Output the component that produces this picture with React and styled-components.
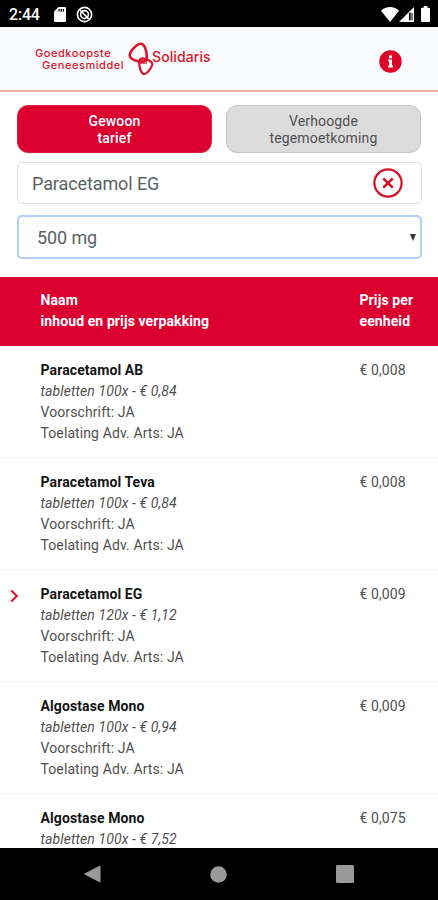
import React from 'react';
import styled, { createGlobalStyle } from 'styled-components';

const GlobalStyle = createGlobalStyle`
  * {
    box-sizing: border-box;
  }

  body {
    margin: 0;
    background: #fff;
    font-family: Roboto, 'Liberation Sans', sans-serif;
  }
`;

const Screen = styled.div`
  display: flex;
  flex-direction: column;
  width: 438px;
  height: 900px;
  overflow: hidden;
  background: #fff;
`;

const StatusBar = styled.div`
  display: flex;
  align-items: center;
  height: 27px;
  flex-shrink: 0;
  padding: 1px 8px 0 9px;
  background: #000;
  color: #fff;
`;

const Clock = styled.span`
  width: 45px;
  font-size: 16px;
  font-weight: 500;
  letter-spacing: -0.2px;
`;

const StatusIcons = styled.div`
  display: flex;
  align-items: center;
  gap: ${props => props.$gap}px;
  margin-left: ${props => (props.$right ? 'auto' : '0')};

  svg {
    display: block;
  }
`;

const Header = styled.header`
  display: flex;
  align-items: center;
  justify-content: space-between;
  height: 65px;
  flex-shrink: 0;
  padding: 0 36px 0 35px;
  background: #f8fafb;
  border-bottom: 2px solid #eeabae;
`;

const Brand = styled.div`
  display: flex;
  align-items: center;
  color: #d8142c;
  font-family: Inter, Roboto, sans-serif;
  font-weight: 500;
`;

const BrandName = styled.div`
  display: flex;
  flex-direction: column;
  width: 93px;
  padding-top: 1px;
  font-size: 11px;
  line-height: 12px;
  letter-spacing: 0.55px;
  white-space: nowrap;
`;

const BrandLine = styled.div`
  height: 12px;
  padding-left: ${props => (props.$indent ? '7px' : '0')};
`;

const Partner = styled.div`
  margin: -4px 0 0 -2px;
  font-size: 14px;
  letter-spacing: 0.1px;
`;

const InfoButton = styled.button`
  display: flex;
  margin-top: 5px;
  padding: 0;
  border: 0;
  background: none;
`;

const Filters = styled.section`
  display: flex;
  flex-direction: column;
  flex-shrink: 0;
  height: 184.5px;
  padding: 13px 16px 0;
`;

const Tabs = styled.div`
  display: flex;
  justify-content: space-between;
  padding: 0 1px;
  margin-bottom: 9px;
`;

const Tab = styled.button`
  width: 195px;
  height: 48px;
  padding: 1px 0 0;
  border: 1px solid ${props => (props.$active ? '#d9223d' : '#c6c6c6')};
  border-radius: 11px;
  background: ${props => (props.$active ? '#dc0031' : '#dcdcdc')};
  color: ${props => (props.$active ? '#fff' : '#505050')};
  font-family: inherit;
  font-size: 14px;
  font-weight: ${props => (props.$active ? 500 : 400)};
  line-height: 17px;
  letter-spacing: 0.15px;
`;

const Field = styled.div`
  display: flex;
  align-items: center;
  justify-content: space-between;
  height: ${props => (props.$focused ? 44 : 42)}px;
  margin: 0 0 11px 1px;
  padding: ${props => (props.$focused ? '0 4px 0 18px' : '0 18px 0 14px')};
  border: ${props => (props.$focused ? '2px solid #b4d1fa' : '1px solid #dcdfe1')};
  border-radius: 5px;
  color: #5a5f64;
  font-size: 18px;
  letter-spacing: -0.1px;
`;

const Columns = styled.div`
  display: grid;
  grid-template-columns: 319px 1fr;
  padding-left: 40.5px;
  flex-shrink: 0;
  font-size: 14px;
  line-height: 21.1px;
  letter-spacing: 0.1px;
`;

const TableHead = styled(Columns)`
  height: 69px;
  padding-top: 13.5px;
  background: #dc0031;
  color: #fff;
  font-weight: 700;
`;

const List = styled.div`
  flex: 1;
  min-height: 0;
  overflow: hidden;
`;

const Row = styled(Columns)`
  grid-template-columns: 30.5px 319px 1fr;
  height: 112px;
  padding: 14px 0 0 10px;
  border-bottom: 1px solid #f2f2f2;
  color: #505050;
`;

const Marker = styled.div`
  padding-top: 5px;

  svg {
    display: block;
  }
`;

const Name = styled.div`
  color: #151515;
  font-weight: 700;
`;

const Packaging = styled.div`
  font-style: italic;
`;

const NavBar = styled.nav`
  display: flex;
  align-items: center;
  justify-content: space-between;
  height: 52px;
  flex-shrink: 0;
  padding: 0 84px;
  background: #000;
`;

const medicines = [
  {
    name: 'Paracetamol AB',
    packaging: 'tabletten 100x - € 0,84',
    details: ['Voorschrift: JA', 'Toelating Adv. Arts: JA'],
    price: '€ 0,008',
  },
  {
    name: 'Paracetamol Teva',
    packaging: 'tabletten 100x - € 0,84',
    details: ['Voorschrift: JA', 'Toelating Adv. Arts: JA'],
    price: '€ 0,008',
  },
  {
    name: 'Paracetamol EG',
    packaging: 'tabletten 120x - € 1,12',
    details: ['Voorschrift: JA', 'Toelating Adv. Arts: JA'],
    price: '€ 0,009',
    selected: true,
  },
  {
    name: 'Algostase Mono',
    packaging: 'tabletten 100x - € 0,94',
    details: ['Voorschrift: JA', 'Toelating Adv. Arts: JA'],
    price: '€ 0,009',
  },
  {
    name: 'Algostase Mono',
    packaging: 'tabletten 100x - € 7,52',
    details: [],
    price: '€ 0,075',
  },
];

const SdCardIcon = () => (
  <svg width="12" height="15" viewBox="0 0 12 15">
    <path d="M4.5 0H11a1 1 0 0 1 1 1v13a1 1 0 0 1-1 1H1a1 1 0 0 1-1-1V4.5z" fill="#fff" />
    <path d="M5 2v2.6M7.2 2v2.6M9.4 2v2.6" stroke="#000" strokeWidth="1.3" />
  </svg>
);

const SyncIcon = () => (
  <svg width="17" height="17" viewBox="0 0 17 17" fill="none" stroke="#fff">
    <circle cx="8.5" cy="8.5" r="7.1" strokeWidth="1.6" />
    <circle cx="8.5" cy="8.5" r="3.9" strokeWidth="1.6" />
    <path d="M4 4l8.6 8.8" strokeWidth="1.7" />
  </svg>
);

const WifiIcon = () => (
  <svg width="18" height="15" viewBox="0 0 18 15">
    <path d="M0 3.7C5-1.2 13-1.2 18 3.7L9 15z" fill="#fff" />
  </svg>
);

const SignalIcon = () => (
  <svg width="15" height="15" viewBox="0 0 15 15">
    <path d="M0 15L15 0v15z" fill="#fff" />
    <path d="M10 5.8h4v7.4h-4z" fill="#777" />
    <path d="M10.6 5.8v7.4" stroke="#000" strokeWidth="1.2" />
  </svg>
);

const BatteryIcon = () => (
  <svg width="9" height="16" viewBox="0 0 10 16" preserveAspectRatio="none">
    <path d="M3 0h4v1.8h2a1 1 0 0 1 1 1V15a1 1 0 0 1-1 1H1a1 1 0 0 1-1-1V2.8a1 1 0 0 1 1-1h2z" fill="#fff" />
  </svg>
);

const LinksLogo = () => (
  <svg width="26" height="34" viewBox="0 0 26 34" fill="none" stroke="#d8142c">
    <path
      d="M12.8 1.7C8.6 2 1.8 9.4 1.8 13.2c0 3.4 5.6 5.6 10.1 6.5 4.4.5 6.9-1.6 6.9-5 0-5.4-2.2-13.1-6-13z"
      strokeWidth="2.6"
    />
    <path
      d="M12 17.4c-1.6 3.2-.3 12.2 3.4 14.6 2.4 1.2 8.2-5.4 8.9-9.6.4-3.8-10.5-7.7-12.3-5z"
      strokeWidth="2.2"
    />
    <path d="M12 17h7v5h-7z" fill="#d8142c" fillOpacity=".65" stroke="none" />
  </svg>
);

const InfoIcon = () => (
  <svg width="23" height="23" viewBox="0 0 23 23">
    <circle cx="11.5" cy="11.5" r="11.2" fill="#dc0527" />
    <path d="M10 5.6h3v2.6h-3zM9.2 9.6H13v6h1v1.9H9.2v-1.9h1v-4.1h-1z" fill="#fff" />
  </svg>
);

const ClearIcon = () => (
  <svg width="30" height="30" viewBox="0 0 30 30" fill="none" stroke="#d61224">
    <circle cx="15" cy="15" r="13.6" strokeWidth="2.2" />
    <path d="M10.3 10.3l9.4 9.4M19.7 10.3l-9.4 9.4" strokeWidth="2.6" />
  </svg>
);

const CaretIcon = () => (
  <svg width="6" height="7" viewBox="0 0 6 7">
    <path d="M0 0h6L3 7z" fill="#333" />
  </svg>
);

const ChevronIcon = () => (
  <svg width="9" height="14" viewBox="0 0 9 14" fill="none" stroke="#dc1428" strokeWidth="2.1">
    <path d="M1.2 1.4L6.9 7l-5.7 5.6" />
  </svg>
);

const MedicineRow = ({ medicine }) => (
  <Row>
    <Marker>{medicine.selected && <ChevronIcon />}</Marker>
    <div>
      <Name>{medicine.name}</Name>
      <Packaging>{medicine.packaging}</Packaging>
      {medicine.details.map(detail => (
        <div key={detail}>{detail}</div>
      ))}
    </div>
    <div>{medicine.price}</div>
  </Row>
);

const App = () => {
  return (
    <Screen>
      <GlobalStyle />
      <StatusBar>
        <Clock>2:44</Clock>
        <StatusIcons $gap={10}>
          <SdCardIcon />
          <SyncIcon />
        </StatusIcons>
        <StatusIcons $gap={7} $right>
          <StatusIcons $gap={0}>
            <WifiIcon />
            <SignalIcon />
          </StatusIcons>
          <BatteryIcon />
        </StatusIcons>
      </StatusBar>
      <Header>
        <Brand>
          <BrandName>
            <BrandLine>Goedkoopste</BrandLine>
            <BrandLine $indent>Geneesmiddel</BrandLine>
          </BrandName>
          <LinksLogo />
          <Partner>Solidaris</Partner>
        </Brand>
        <InfoButton>
          <InfoIcon />
        </InfoButton>
      </Header>
      <Filters>
        <Tabs>
          <Tab $active>
            Gewoon
            <br />
            tarief
          </Tab>
          <Tab>
            Verhoogde
            <br />
            tegemoetkoming
          </Tab>
        </Tabs>
        <Field>
          Paracetamol EG
          <ClearIcon />
        </Field>
        <Field $focused>
          500 mg
          <CaretIcon />
        </Field>
      </Filters>
      <TableHead>
        <div>
          <div>Naam</div>
          <div>inhoud en prijs verpakking</div>
        </div>
        <div>
          <div>Prijs per</div>
          <div>eenheid</div>
        </div>
      </TableHead>
      <List>
        {medicines.map((medicine, idx) => (
          <MedicineRow key={idx} medicine={medicine} />
        ))}
      </List>
      <NavBar>
        <svg width="17" height="18" viewBox="0 0 17 18">
          <path d="M0.5 9L16 1v16z" fill="#999" stroke="#999" strokeLinejoin="round" />
        </svg>
        <svg width="17" height="17" viewBox="0 0 17 17">
          <circle cx="8.5" cy="8.5" r="8.3" fill="#999" />
        </svg>
        <svg width="18" height="18" viewBox="0 0 18 18">
          <rect width="18" height="18" rx="1.2" fill="#999" />
        </svg>
      </NavBar>
    </Screen>
  );
};

export default App;
